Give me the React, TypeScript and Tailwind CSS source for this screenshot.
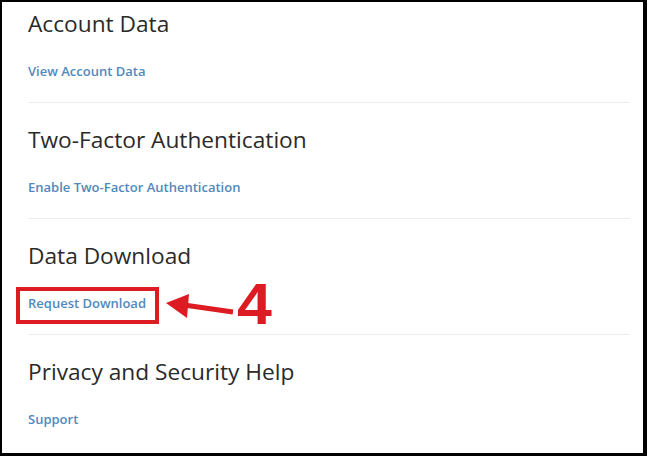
import type { FC } from "react";

interface Section {
  title: string;
  link: string;
}

const sections: Section[] = [
  { title: "Account Data", link: "View Account Data" },
  { title: "Two-Factor Authentication", link: "Enable Two-Factor Authentication" },
  { title: "Data Download", link: "Request Download" },
  { title: "Privacy and Security Help", link: "Support" },
];

const Callout: FC = () => (
  <>
    {/* red box round the link */}
    <div className="absolute left-[-12px] top-[-7px] w-[143px] h-[37px] border-[4px] border-[#dc1c22]" />
    {/* arrow */}
    <svg
      className="absolute left-[136px] top-[-14px]"
      width="72"
      height="45"
      viewBox="0 0 72 45"
    >
      <line x1="20" y1="25" x2="69" y2="32" stroke="#dc1c22" strokeWidth="5" />
      <polygon points="2,23 25,14 23,38" fill="#dc1c22" />
    </svg>
    <span className="absolute left-[209px] top-[-20px] text-[57px] leading-[60px] font-bold text-[#dc1c22] font-['Liberation_Sans',sans-serif] scale-x-110 origin-left">
      4
    </span>
  </>
);

export default function App() {
  return (
    <div className="w-[650px] h-[457px] bg-white">
      <div className="w-[647px] h-[456px] border-l-2 border-t-2 border-r-4 border-b-[3px] border-black pt-[7px] pl-[26px] pr-[13px] font-['Open_Sans',sans-serif]">
        {sections.map((s, i) => (
          <section
            key={s.title}
            className={i > 0 ? "border-t border-[#ececec] pt-[22px]" : ""}
          >
            <h2 className="text-[22.7px] leading-[30px] font-normal text-[#2a2a2a]">
              {s.title}
            </h2>
            <div className="mt-[23px] mb-[22px] relative w-fit">
              <a className="block text-[13px] leading-[18px] font-semibold text-[#5189bb]">
                {s.link}
              </a>
              {s.title === "Data Download" && <Callout />}
            </div>
          </section>
        ))}
      </div>
    </div>
  );
}
